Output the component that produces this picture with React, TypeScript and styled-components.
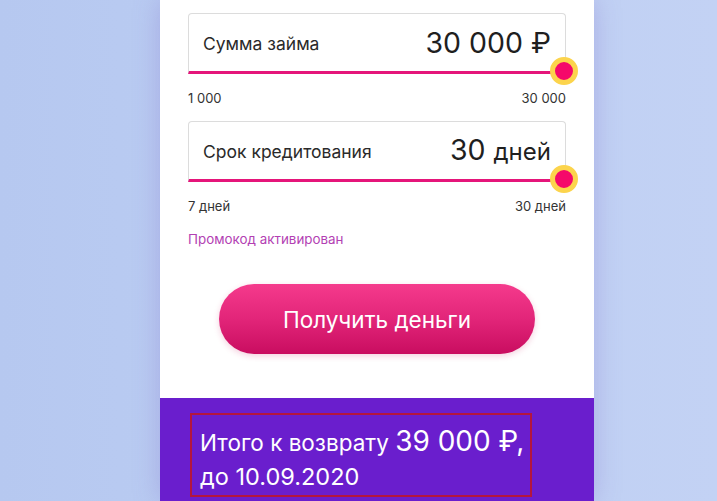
import styled, { createGlobalStyle } from "styled-components";

const GlobalStyle = createGlobalStyle`
  html, body {
    margin: 0;
    padding: 0;
    height: 100%;
  }
  body {
    font-family: Inter, "Liberation Sans", Arial, sans-serif;
    background: linear-gradient(90deg, #b6c8f0 0%, #bccef3 50%, #c3d2f4 100%);
    overflow: hidden;
  }
`

const Page = styled.div`
  width: 717px;
  height: 501px;
  display: flex;
  padding-left: 160px;
  box-sizing: border-box;
`

const Panel = styled.section`
  width: 434px;
  height: 501px;
  background: #fff;
  display: flex;
  flex-direction: column;
  box-shadow: 0 0 24px rgba(130, 110, 200, 0.35);
`

const Form = styled.div`
  flex: 1;
  padding: 13px 28px 0;
  display: flex;
  flex-direction: column;
`

const Field = styled.div<{ $gap?: number }>`
  position: relative;
  height: 57px;
  margin-top: ${p => p.$gap ?? 0}px;
  border: 1px solid #dcdcdc;
  border-bottom: 3px solid #e5157a;
  border-radius: 4px 4px 0 0;
  display: flex;
  align-items: center;
  justify-content: space-between;
  padding: 0 14px 0 14px;
`

const Label = styled.span`
  font-size: 17.5px;
  line-height: 20px;
  color: #2a2a2a;
  margin-top: 2px;
`

const Value = styled.span`
  font-size: 28.5px;
  line-height: 36px;
  color: #1f1f1f;
  display: flex;
  align-items: baseline;
  gap: 8px;
`

const Unit = styled.span`
  font-size: 24px;
`

const Knob = styled.span`
  position: absolute;
  right: -13px;
  bottom: -14px;
  width: 18px;
  height: 18px;
  border-radius: 50%;
  background: #f5086a;
  border: 5px solid #fcd44c;
`

const Range = styled.div`
  display: flex;
  justify-content: space-between;
  font-size: 13px;
  line-height: 16px;
  color: #333;
  margin-top: 16px;
  height: 16px;
`

const Promo = styled.a`
  font-size: 13.4px;
  line-height: 16px;
  color: #b33fb3;
  margin-top: 17px;
`

const Button = styled.button`
  align-self: center;
  margin-top: 37px;
  width: 316px;
  height: 70px;
  border: none;
  border-radius: 35px;
  background: linear-gradient(180deg, #f53a8c 0%, #e22579 50%, #c90d60 100%);
  color: #fff;
  font-family: inherit;
  font-size: 22.5px;
  box-shadow: 0 2px 6px rgba(200, 20, 90, 0.2);
`

const Footer = styled.footer`
  height: 103px;
  background: #6a1ecd;
  padding: 15px 0 0 30px;
  box-sizing: border-box;
`

const Total = styled.div`
  width: 342px;
  height: 84px;
  border: 2px solid #b3163e;
  color: #fff;
  padding: 9px 0 0 8px;
  box-sizing: border-box;
  font-size: 22.5px;
  line-height: 34px;
`

const Sum = styled.span`
  font-size: 28px;
`

const Due = styled.span`
  font-size: 23.5px;
`

export default function App() {
  return (
    <>
      <GlobalStyle />
      <Page>
        <Panel>
          <Form>
            <Field>
              <Label>Сумма займа</Label>
              <Value>30 000 ₽</Value>
              <Knob />
            </Field>
            <Range>
              <span>1 000</span>
              <span>30 000</span>
            </Range>
            <Field $gap={15}>
              <Label>Срок кредитования</Label>
              <Value>
                30 <Unit>дней</Unit>
              </Value>
              <Knob />
            </Field>
            <Range>
              <span>7 дней</span>
              <span>30 дней</span>
            </Range>
            <Promo>Промокод активирован</Promo>
            <Button>Получить деньги</Button>
          </Form>
          <Footer>
            <Total>
              Итого к возврату <Sum>39 000 ₽,</Sum>
              <br />
              <Due>до 10.09.2020</Due>
            </Total>
          </Footer>
        </Panel>
      </Page>
    </>
  );
}
